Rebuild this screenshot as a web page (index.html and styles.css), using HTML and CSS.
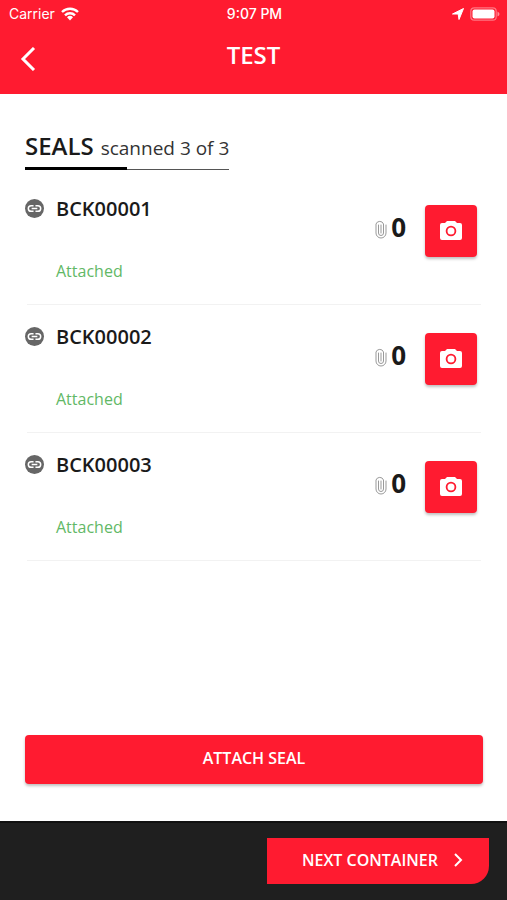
FILE: index.html
```html
<!DOCTYPE html>
<html lang="en">

<head>
    <meta charset="utf-8">
    <meta name="viewport" content="width=device-width, initial-scale=1.0">
    <title>Test</title>
    <link rel="stylesheet" href="styles.css">
</head>

<body>

    <svg class="sprite" aria-hidden="true">
        <symbol id="link" viewBox="0 0 20 20">
            <circle cx="10" cy="10" r="10" fill="#666" />
            <path d="M9 7H6.500a3 3 0 0 0 0 6H9M11 7h2.500a3 3 0 0 1 0 6H11M7 10h6" fill="none" stroke="#fff" stroke-width="1.600" />
        </symbol>
        <symbol id="clip" viewBox="0 0 12 20">
            <path d="M3.500 6v8a2.500 2.500 0 0 0 5 0V5a4 4 0 0 0-7.500 0v9a5 5 0 0 0 10 0V6M6 6v8" fill="none" stroke="#999" stroke-width="1" stroke-linecap="round" />
        </symbol>
        <symbol id="camera" viewBox="0 0 22 20">
            <path d="M7 1h8l2 2h3a2 2 0 0 1 2 2v13a2 2 0 0 1-2 2H2a2 2 0 0 1-2-2V5a2 2 0 0 1 2-2h3z" fill="#fff" />
            <circle cx="11" cy="11" r="4.400" fill="none" stroke="#ff1b30" stroke-width="1.800" />
        </symbol>
    </svg>

    <header>
        <div class="status">
            <div class="carrier">
                <span>Carrier</span>
                <svg width="18" height="14" viewBox="0 0 18 14" fill="none" stroke="#fff" stroke-width="2.400">
                    <path d="M1 5a11.500 11.500 0 0 1 16 0M4 8.300a7 7 0 0 1 10 0" />
                    <path d="M6 10.300a4.300 4.300 0 0 1 6 0L9 13.500z" fill="#fff" stroke="none" />
                </svg>
            </div>
            <span class="time">9:07 PM</span>
            <div class="battery">
                <svg width="12" height="12" viewBox="0 0 12 12">
                    <path d="M11.500.500L7 11.500 6.200 6H.500z" fill="#fff" stroke="#fff" stroke-linejoin="round" />
                </svg>
                <svg width="30" height="14" viewBox="0 0 30 14">
                    <rect x=".8" y=".8" width="25.400" height="12.400" rx="3.500" fill="none" stroke="#fff" stroke-opacity=".4" stroke-width="1.200" />
                    <rect x="2.500" y="2.500" width="22" height="9" rx="2" fill="#fff" />
                    <path d="M27.500 4.500q2 1 2 2.500t-2 2.500z" fill="#fff" opacity=".5" />
                </svg>
            </div>
        </div>
        <div class="titlebar">
            <button class="back" aria-label="Back">
                <svg width="16" height="24" viewBox="0 0 16 24" fill="none" stroke="#fff" stroke-width="3">
                    <path d="M14 1L3 12l11 11" />
                </svg>
            </button>
            <h1>TEST</h1>
        </div>
    </header>

    <main>
        <h2><strong>SEALS</strong> scanned 3 of 3</h2>

        <ul class="seals">
            <li class="seal">
                <svg class="link"><use href="#link" /></svg>
                <div class="info">
                    <h3>BCK00001</h3>
                    <p>Attached</p>
                </div>
                <div class="files">
                    <svg class="clip"><use href="#clip" /></svg>
                    <span>0</span>
                </div>
                <button class="photo" aria-label="Photograph BCK00001"><svg class="camera"><use href="#camera" /></svg></button>
            </li>
            <li class="seal">
                <svg class="link"><use href="#link" /></svg>
                <div class="info">
                    <h3>BCK00002</h3>
                    <p>Attached</p>
                </div>
                <div class="files">
                    <svg class="clip"><use href="#clip" /></svg>
                    <span>0</span>
                </div>
                <button class="photo" aria-label="Photograph BCK00002"><svg class="camera"><use href="#camera" /></svg></button>
            </li>
            <li class="seal">
                <svg class="link"><use href="#link" /></svg>
                <div class="info">
                    <h3>BCK00003</h3>
                    <p>Attached</p>
                </div>
                <div class="files">
                    <svg class="clip"><use href="#clip" /></svg>
                    <span>0</span>
                </div>
                <button class="photo" aria-label="Photograph BCK00003"><svg class="camera"><use href="#camera" /></svg></button>
            </li>
        </ul>

        <button class="attach">ATTACH SEAL</button>
    </main>

    <footer>
        <button class="next">
            NEXT CONTAINER
            <svg width="10" height="16" viewBox="0 0 10 16" fill="none" stroke="#fff" stroke-width="2">
                <path d="M2 2l6 6-6 6" />
            </svg>
        </button>
    </footer>

</body>

</html>
```

FILE: styles.css
```css
* {
    box-sizing: border-box;
}

body {
    margin: 0;
    min-height: 100vh;
    display: flex;
    flex-direction: column;
    background: #fff;
    color: #1a1a1a;
    font-family: "Open Sans", sans-serif;
}

h1,
h2,
h3,
p,
ul {
    margin: 0;
    padding: 0;
}

svg {
    display: block;
}

button {
    border: none;
    padding: 0;
    background: #ff1b30;
    color: #fff;
    font-family: inherit;
    font-weight: 600;
}

.sprite {
    position: absolute;
    width: 0;
    height: 0;
}

header {
    background: #ff1b30;
    color: #fff;
}

.status {
    display: grid;
    grid-template-columns: 1fr auto 1fr;
    align-items: center;
    height: 27px;
    padding: 0 7px 0 9px;
    font-family: Inter, sans-serif;
    font-size: 14px;
}

.carrier,
.battery {
    display: flex;
    align-items: center;
    gap: 6px;
}

.battery {
    justify-content: flex-end;
}

.time {
    font-weight: 500;
}

.titlebar {
    display: grid;
    grid-template-columns: 40px 1fr 40px;
    align-items: center;
    height: 67px;
    padding: 0 8px 8px;
}

.back {
    display: flex;
    align-items: center;
    height: 40px;
    padding: 4px 12px 0;
}

h1 {
    padding-bottom: 4px;
    font-size: 24px;
    font-weight: 600;
    text-align: center;
}

main {
    flex: 1;
    display: flex;
    flex-direction: column;
    padding: 36px 24px 37px 25px;
}

h2 {
    align-self: flex-start;
    padding-bottom: 6px;
    background:
        linear-gradient(#000, #000) left bottom / 50% 3px no-repeat,
        linear-gradient(#555, #555) left bottom / 100% 1px no-repeat;
    font-size: 19px;
    line-height: 32px;
    font-weight: 400;
    color: #333;
}

h2 strong {
    margin-right: 2px;
    font-size: 24px;
    font-weight: 600;
    color: #1a1a1a;
}

.seals {
    list-style: none;
    padding-top: 7px;
}

.seal {
    display: flex;
    height: 128px;
    padding: 22px 6px 0 0;
    background: linear-gradient(#f2f2f2, #f2f2f2) right 2px bottom / calc(100% - 4px) 1px no-repeat;
}

.link {
    width: 19px;
    height: 19px;
    margin-right: 12px;
}

.info {
    flex: 1;
}

h3 {
    font-size: 20px;
    line-height: 20px;
    font-weight: 600;
}

.info p {
    padding-top: 42px;
    font-size: 16px;
    line-height: 20px;
    color: #62b866;
}

.files {
    display: flex;
    align-items: center;
    gap: 4px;
    height: 40px;
    margin: 8px 19px 0 0;
    font-size: 26px;
    font-weight: 700;
}

.clip {
    width: 12px;
    height: 20px;
    margin-top: 4px;
}

.photo {
    display: flex;
    align-items: center;
    justify-content: center;
    width: 52px;
    height: 52px;
    margin-top: 6px;
    padding-bottom: 2px;
    border-radius: 4px;
    box-shadow: 0 2px 3px rgba(0, 0, 0, .25);
}

.camera {
    width: 22px;
    height: 20px;
}

.attach {
    height: 49px;
    margin-top: auto;
    padding-bottom: 4px;
    border-radius: 4px;
    box-shadow: 0 2px 3px rgba(0, 0, 0, .25);
    font-size: 16px;
}

footer {
    display: flex;
    justify-content: flex-end;
    align-items: center;
    height: 79px;
    padding: 0 18px 2px 0;
    border-top: 2px solid #111;
    background: #1f1f1f;
}

.next {
    display: flex;
    align-items: center;
    gap: 15px;
    height: 46px;
    padding: 0 26px 2px 35px;
    border-radius: 0 0 18px 0;
    font-size: 16px;
}
```
